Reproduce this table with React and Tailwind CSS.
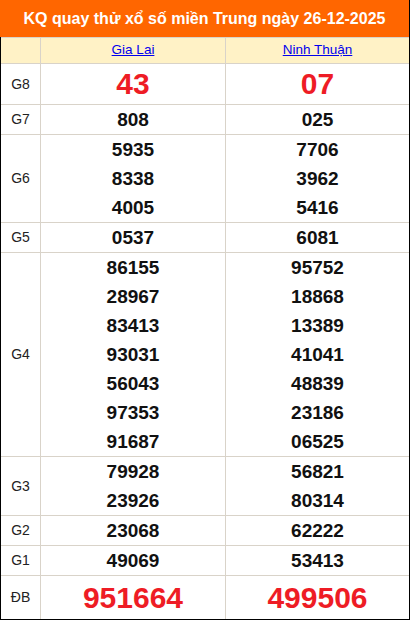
const rows = [
  { label: 'G8', a: ['43'], b: ['07'], big: true, h: 'h-[41px]' },
  { label: 'G7', a: ['808'], b: ['025'] },
  { label: 'G6', a: ['5935', '8338', '4005'], b: ['7706', '3962', '5416'] },
  { label: 'G5', a: ['0537'], b: ['6081'] },
  {
    label: 'G4',
    a: ['86155', '28967', '83413', '93031', '56043', '97353', '91687'],
    b: ['95752', '18868', '13389', '41041', '48839', '23186', '06525'],
  },
  { label: 'G3', a: ['79928', '23926'], b: ['56821', '80314'] },
  { label: 'G2', a: ['23068'], b: ['62222'] },
  { label: 'G1', a: ['49069'], b: ['53413'] },
  { label: 'ĐB', a: ['951664'], b: ['499506'], big: true, h: 'h-[44px]' },
]

function Nums({ list, big }) {
  if (big) {
    return <div className="text-[30px] font-bold text-[#ee1c25] leading-none">{list[0]}</div>
  }
  return (
    <div className="flex flex-col items-center">
      {list.map((n) => (
        <div key={n} className="h-[29px] leading-[29px] text-[19px] font-bold text-[#111]">
          {n}
        </div>
      ))}
    </div>
  )
}

export default function App() {
  return (
    <div className="w-[410px] h-[620px] bg-white font-['Liberation_Sans',Arial,sans-serif]">
      <div className="h-[37px] bg-[#ff6600] border-r border-black flex items-center justify-center text-white font-bold text-[16px]">
        KQ quay thử xổ số miền Trung ngày 26-12-2025
      </div>
      <div className="border-l border-r border-b border-black">
        <div className="flex h-[26px] border-t border-[#d9d3c9] bg-[#fff2c6]">
          <div className="w-[40px] border-r border-[#d9d3c9]" />
          <div className="w-[185px] border-r border-[#d9d3c9] flex items-center justify-center">
            <a href="#" className="text-[13.5px] text-[#0000ee] underline">Gia Lai</a>
          </div>
          <div className="flex-1 flex items-center justify-center">
            <a href="#" className="text-[13.5px] text-[#0000ee] underline">Ninh Thuận</a>
          </div>
        </div>
        {rows.map((r) => (
          <div key={r.label} className={`flex border-t border-[#d9d3c9] ${r.h || ''}`}>
            <div className="w-[40px] border-r border-[#d9d3c9] flex items-center justify-center text-[14px] text-[#222]">
              {r.label}
            </div>
            <div className="w-[185px] border-r border-[#d9d3c9] flex items-center justify-center">
              <Nums list={r.a} big={r.big} />
            </div>
            <div className="flex-1 flex items-center justify-center">
              <Nums list={r.b} big={r.big} />
            </div>
          </div>
        ))}
      </div>
    </div>
  )
}
